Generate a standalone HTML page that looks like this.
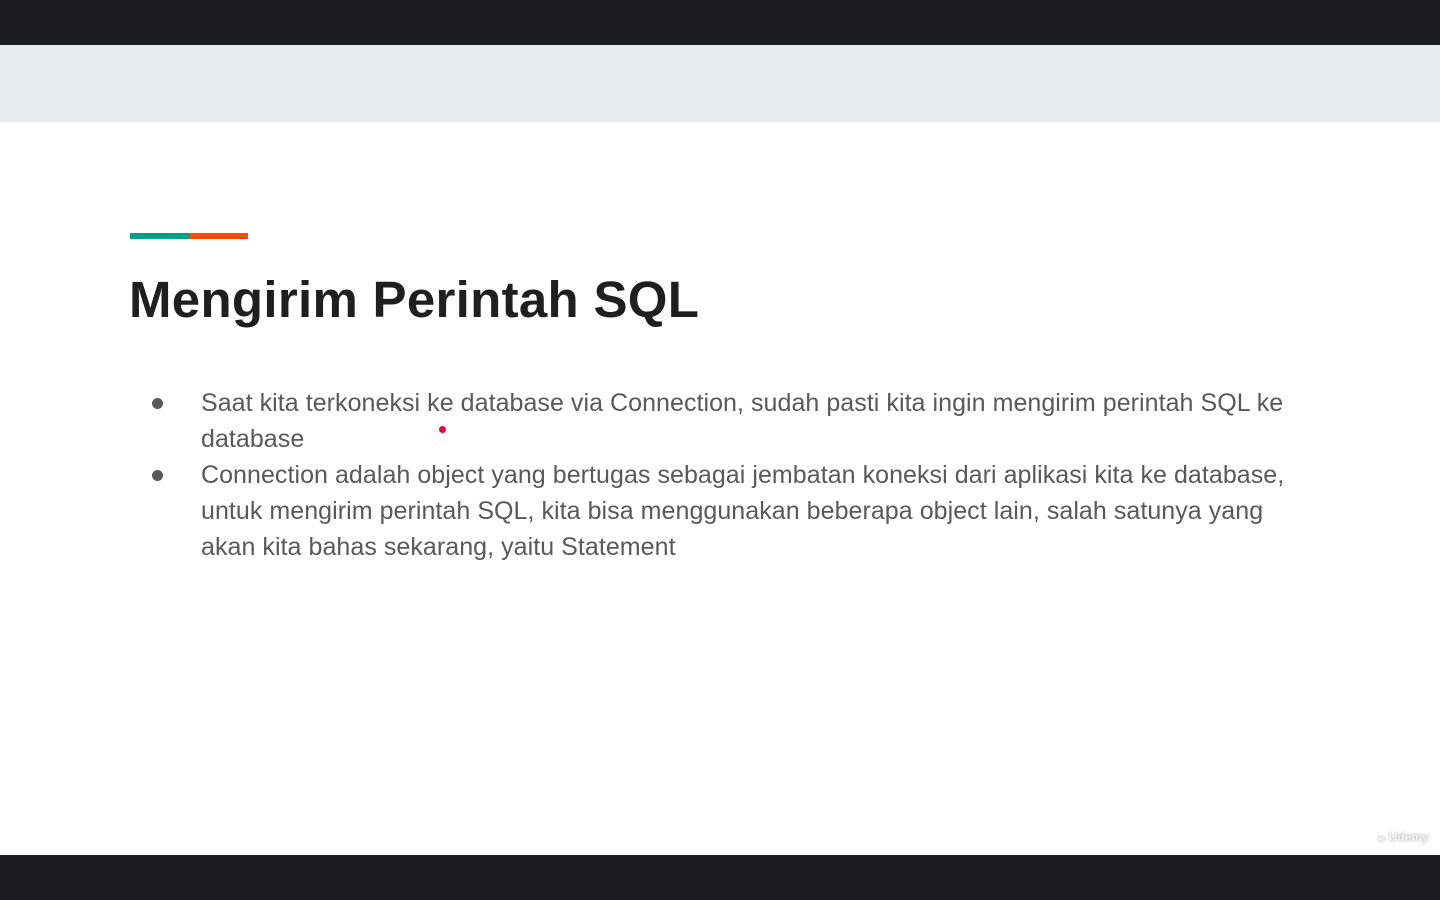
<!DOCTYPE html>
<html><head><meta charset="utf-8"><style>
body{margin:0;width:1440px;height:900px;background:#fff;position:relative;overflow:hidden;font-family:"Liberation Sans",sans-serif}
.top{position:absolute;left:0;top:0;width:1440px;height:45px;background:#1c1c1e}
.band{position:absolute;left:0;top:45px;width:1440px;height:77px;background:#e6eceb}
.bot{position:absolute;left:0;top:855px;width:1440px;height:45px;background:#1c1c1e}
.bar1{position:absolute;left:130px;top:233px;width:60px;height:6px;background:#00a08a}
.bar2{position:absolute;left:190px;top:233px;width:58px;height:6px;background:#ff4c0a}
h1{position:absolute;left:129px;top:267px;margin:0;font-size:51px;font-weight:bold;color:#1f1f1f;letter-spacing:0.3px;line-height:66px}
.l{position:absolute;left:201px;font-size:25px;color:#595959;white-space:nowrap;line-height:36px;letter-spacing:0.05px}
.b{position:absolute;left:152px;width:11px;height:11px;border-radius:50%;background:#595959}
.dot{position:absolute;left:439px;top:426px;width:7px;height:7px;border-radius:50%;background:#f0003c}
.ud{position:absolute;left:1378px;top:830px;font-size:12px;color:#f4f4f4;font-weight:bold;text-shadow:0 0 2px #999}
</style></head><body>
<div class="top"></div><div class="band"></div><div class="bot"></div>
<div class="bar1"></div><div class="bar2"></div>
<h1>Mengirim Perintah SQL</h1>
<div class="b" style="top:398px"></div>
<div class="b" style="top:470px"></div>
<div class="l" style="top:385px">Saat kita terkoneksi ke database via Connection, sudah pasti kita ingin mengirim perintah SQL ke</div>
<div class="l" style="top:421px">database</div>
<div class="l" style="top:457px">Connection adalah object yang bertugas sebagai jembatan koneksi dari aplikasi kita ke database,</div>
<div class="l" style="top:493px">untuk mengirim perintah SQL, kita bisa menggunakan beberapa object lain, salah satunya yang</div>
<div class="l" style="top:529px">akan kita bahas sekarang, yaitu Statement</div>
<div class="dot"></div>
<div class="ud">𝓾 Udemy</div>
</body></html>
